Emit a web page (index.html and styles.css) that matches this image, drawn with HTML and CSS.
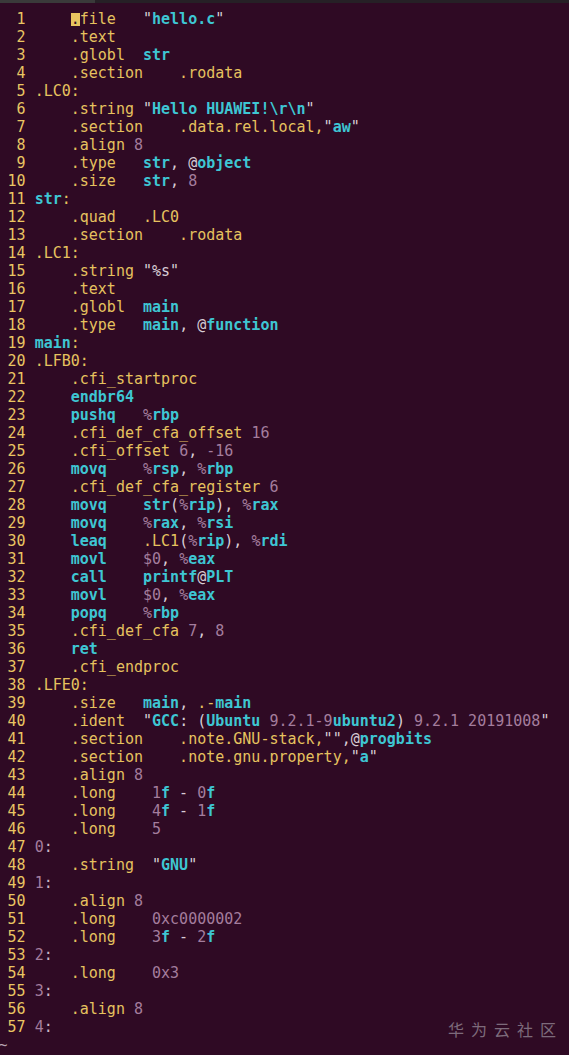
FILE: index.html
```html
<!DOCTYPE html>
<html>
<head>
<meta charset="utf-8">
<link rel="stylesheet" href="styles.css">
</head>
<body>
<div class="topbar"><div class="tb-left"></div><div class="tb-right"></div></div>
<div class="term">
<div class="l"><span class="n">  1 </span>    <span class="cur">.</span>file   <span class="w">"</span><span class="c">hello.c</span><span class="w">"</span></div>
<div class="l"><span class="n">  2 </span>    .text</div>
<div class="l"><span class="n">  3 </span>    .globl  <span class="c">str</span></div>
<div class="l"><span class="n">  4 </span>    .section    .rodata</div>
<div class="l"><span class="n">  5 </span>.LC0:</div>
<div class="l"><span class="n">  6 </span>    .string <span class="w">"</span><span class="c">Hello HUAWEI!\r\n</span><span class="w">"</span></div>
<div class="l"><span class="n">  7 </span>    .section    .data.rel.local,<span class="w">"</span><span class="c">aw</span><span class="w">"</span></div>
<div class="l"><span class="n">  8 </span>    .align <span class="p">8</span></div>
<div class="l"><span class="n">  9 </span>    .type   <span class="c">str</span><span class="w">, @</span><span class="c">object</span></div>
<div class="l"><span class="n"> 10 </span>    .size   <span class="c">str</span><span class="w">, </span><span class="p">8</span></div>
<div class="l"><span class="n"> 11 </span><span class="c">str</span>:</div>
<div class="l"><span class="n"> 12 </span>    .quad   .LC0</div>
<div class="l"><span class="n"> 13 </span>    .section    .rodata</div>
<div class="l"><span class="n"> 14 </span>.LC1:</div>
<div class="l"><span class="n"> 15 </span>    .string <span class="w">"%s"</span></div>
<div class="l"><span class="n"> 16 </span>    .text</div>
<div class="l"><span class="n"> 17 </span>    .globl  <span class="c">main</span></div>
<div class="l"><span class="n"> 18 </span>    .type   <span class="c">main</span><span class="w">, @</span><span class="c">function</span></div>
<div class="l"><span class="n"> 19 </span><span class="c">main</span>:</div>
<div class="l"><span class="n"> 20 </span>.LFB0:</div>
<div class="l"><span class="n"> 21 </span>    .cfi_startproc</div>
<div class="l"><span class="n"> 22 </span>    <span class="c">endbr64</span></div>
<div class="l"><span class="n"> 23 </span>    <span class="c">pushq</span>   <span class="p">%</span><span class="c">rbp</span></div>
<div class="l"><span class="n"> 24 </span>    .cfi_def_cfa_offset <span class="p">16</span></div>
<div class="l"><span class="n"> 25 </span>    .cfi_offset <span class="p">6</span><span class="w">, </span><span class="p">-16</span></div>
<div class="l"><span class="n"> 26 </span>    <span class="c">movq</span>    <span class="p">%</span><span class="c">rsp</span><span class="w">, </span><span class="p">%</span><span class="c">rbp</span></div>
<div class="l"><span class="n"> 27 </span>    .cfi_def_cfa_register <span class="p">6</span></div>
<div class="l"><span class="n"> 28 </span>    <span class="c">movq</span>    <span class="c">str</span><span class="w">(</span><span class="p">%</span><span class="c">rip</span><span class="w">), </span><span class="p">%</span><span class="c">rax</span></div>
<div class="l"><span class="n"> 29 </span>    <span class="c">movq</span>    <span class="p">%</span><span class="c">rax</span><span class="w">, </span><span class="p">%</span><span class="c">rsi</span></div>
<div class="l"><span class="n"> 30 </span>    <span class="c">leaq</span>    .LC1<span class="w">(</span><span class="p">%</span><span class="c">rip</span><span class="w">), </span><span class="p">%</span><span class="c">rdi</span></div>
<div class="l"><span class="n"> 31 </span>    <span class="c">movl</span>    <span class="p">$0</span><span class="w">, </span><span class="p">%</span><span class="c">eax</span></div>
<div class="l"><span class="n"> 32 </span>    <span class="c">call</span>    <span class="c">printf</span><span class="w">@</span><span class="c">PLT</span></div>
<div class="l"><span class="n"> 33 </span>    <span class="c">movl</span>    <span class="p">$0</span><span class="w">, </span><span class="p">%</span><span class="c">eax</span></div>
<div class="l"><span class="n"> 34 </span>    <span class="c">popq</span>    <span class="p">%</span><span class="c">rbp</span></div>
<div class="l"><span class="n"> 35 </span>    .cfi_def_cfa <span class="p">7</span><span class="w">, </span><span class="p">8</span></div>
<div class="l"><span class="n"> 36 </span>    <span class="c">ret</span></div>
<div class="l"><span class="n"> 37 </span>    .cfi_endproc</div>
<div class="l"><span class="n"> 38 </span>.LFE0:</div>
<div class="l"><span class="n"> 39 </span>    .size   <span class="c">main</span><span class="w">, </span>.-<span class="c">main</span></div>
<div class="l"><span class="n"> 40 </span>    .ident  <span class="w">"</span><span class="c">GCC</span><span class="w">: (</span><span class="c">Ubuntu</span> <span class="p">9.2.1-9</span><span class="c">ubuntu2</span><span class="w">)</span> <span class="p">9.2.1 20191008</span><span class="w">"</span></div>
<div class="l"><span class="n"> 41 </span>    .section    .note.GNU-stack,<span class="w">"",@</span><span class="c">progbits</span></div>
<div class="l"><span class="n"> 42 </span>    .section    .note.gnu.property,<span class="w">"</span><span class="c">a</span><span class="w">"</span></div>
<div class="l"><span class="n"> 43 </span>    .align <span class="p">8</span></div>
<div class="l"><span class="n"> 44 </span>    .long    <span class="p">1</span><span class="c">f</span><span class="w"> - </span><span class="p">0</span><span class="c">f</span></div>
<div class="l"><span class="n"> 45 </span>    .long    <span class="p">4</span><span class="c">f</span><span class="w"> - </span><span class="p">1</span><span class="c">f</span></div>
<div class="l"><span class="n"> 46 </span>    .long    <span class="p">5</span></div>
<div class="l"><span class="n"> 47 </span><span class="p">0</span><span class="k">:</span></div>
<div class="l"><span class="n"> 48 </span>    .string  <span class="w">"</span><span class="c">GNU</span><span class="w">"</span></div>
<div class="l"><span class="n"> 49 </span><span class="p">1</span><span class="k">:</span></div>
<div class="l"><span class="n"> 50 </span>    .align <span class="p">8</span></div>
<div class="l"><span class="n"> 51 </span>    .long    <span class="p">0xc0000002</span></div>
<div class="l"><span class="n"> 52 </span>    .long    <span class="p">3</span><span class="c">f</span><span class="w"> - </span><span class="p">2</span><span class="c">f</span></div>
<div class="l"><span class="n"> 53 </span><span class="p">2</span><span class="k">:</span></div>
<div class="l"><span class="n"> 54 </span>    .long    <span class="p">0x3</span></div>
<div class="l"><span class="n"> 55 </span><span class="p">3</span><span class="k">:</span></div>
<div class="l"><span class="n"> 56 </span>    .align <span class="p">8</span></div>
<div class="l"><span class="n"> 57 </span><span class="p">4</span><span class="k">:</span></div>
<div class="l"><span class="t">~</span></div>
</div>
<div class="watermark">华为云社区</div>
</body>
</html>
```

FILE: styles.css
```css
html, body {
  margin: 0;
  padding: 0;
  background: #2f0a24;
  height: 1055px;
  overflow: hidden;
}
body {
  position: relative;
}
.topbar {
  display: flex;
  height: 3px;
}
.tb-left {
  width: 95px;
  background: #3a3a3a;
}
.tb-right {
  flex: 1;
  background: #262026;
}
.term {
  padding-top: 7px;
  margin-left: -1.5px;
  font-family: "DejaVu Sans Mono", monospace;
  font-size: 15px;
  line-height: 18px;
  color: #e6c25f;
}
.l {
  height: 18px;
  white-space: pre;
}
.n {
  color: #e9c563;
}
.c {
  color: #3ec6d3;
  font-weight: bold;
}
.p {
  color: #a47d9d;
}
.w {
  color: #d8cdd5;
}
.k {
  color: #c9b6c6;
}
.t {
  color: #b8a6b4;
}
.cur {
  background: linear-gradient(to bottom, transparent 3px, #e8c460 3px, #e8c460 16px, transparent 16px);
  color: #2f0a24;
}
.watermark {
  position: absolute;
  right: 13px;
  bottom: 16px;
  font-family: "Noto Sans CJK SC", sans-serif;
  font-size: 16px;
  line-height: 20px;
  letter-spacing: 7px;
  margin-right: -7px;
  color: #7d6a7b;
}
```
